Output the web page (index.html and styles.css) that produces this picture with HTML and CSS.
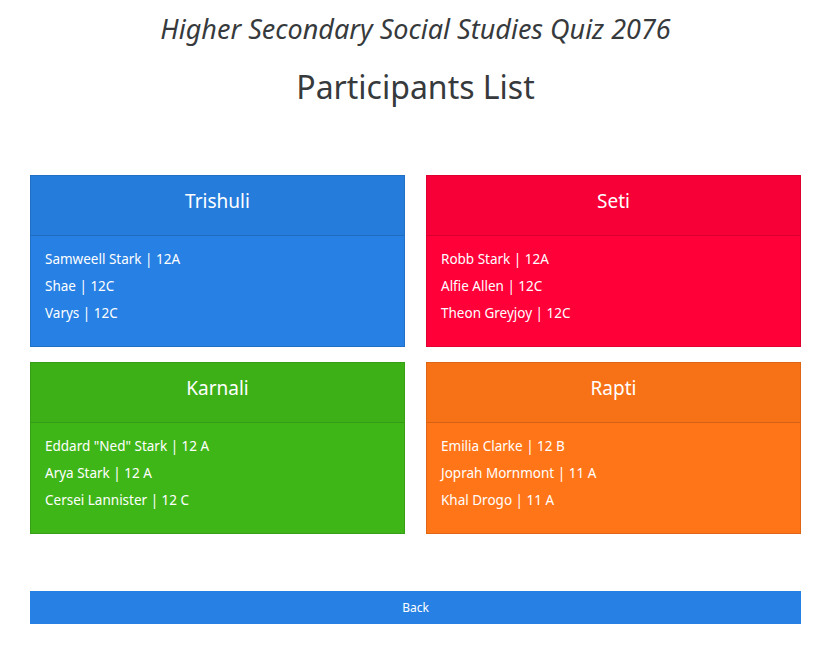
FILE: index.html
```html
<!DOCTYPE html>
<html lang="en">
<head>
  <meta charset="UTF-8" />
  <meta name="viewport" content="width=device-width, initial-scale=1" />
  <title>Participants List</title>
  <link rel="stylesheet" href="styles.css">
</head>
<body>
  <div class="container">
    <h3 class="quiz-title">Higher Secondary Social Studies Quiz 2076</h3>
    <h1 class="page-title">Participants List</h1>

    <div class="houses">
      <div class="card card-blue">
        <div class="card-header">Trishuli</div>
        <div class="card-body">
          <p>Samweell Stark | 12A</p>
          <p>Shae | 12C</p>
          <p>Varys | 12C</p>
        </div>
      </div>
      <div class="card card-red">
        <div class="card-header">Seti</div>
        <div class="card-body">
          <p>Robb Stark | 12A</p>
          <p>Alfie Allen | 12C</p>
          <p>Theon Greyjoy | 12C</p>
        </div>
      </div>
      <div class="card card-green">
        <div class="card-header">Karnali</div>
        <div class="card-body">
          <p>Eddard "Ned" Stark | 12 A</p>
          <p>Arya Stark | 12 A</p>
          <p>Cersei Lannister | 12 C</p>
        </div>
      </div>
      <div class="card card-orange">
        <div class="card-header">Rapti</div>
        <div class="card-body">
          <p>Emilia Clarke | 12 B</p>
          <p>Joprah Mornmont | 11 A</p>
          <p>Khal Drogo | 11 A</p>
        </div>
      </div>
    </div>

    <button class="back-btn" type="button">Back</button>
  </div>
</body>
</html>
```

FILE: styles.css
```css
body {
  margin: 0;
  font-family: "Noto Sans", "Open Sans", sans-serif;
  color: #373a3c;
  background-color: #fff;
}
.container {
  width: 771px;
  margin: 0 0 0 30px;
  padding-top: 12px;
}
.quiz-title {
  margin: 0 0 0 -30px;
  width: 831px;
  text-align: center;
  font-style: italic;
  font-weight: 400;
  font-size: 27px;
  line-height: 34px;
}
.page-title {
  margin: 19px 0 0;
  text-align: center;
  font-weight: 400;
  font-size: 32px;
  line-height: 44px;
}
.houses {
  display: grid;
  grid-template-columns: 1fr 1fr;
  column-gap: 21px;
  row-gap: 15px;
  margin-top: 66px;
}
.card {
  border: 1px solid rgba(0, 0, 0, 0.125);
  color: #fff;
}
.card-header {
  box-sizing: border-box;
  height: 60px;
  padding-bottom: 9px;
  display: flex;
  align-items: center;
  justify-content: center;
  font-size: 19px;
  background-color: rgba(0, 0, 0, 0.03);
  border-bottom: 1px solid rgba(0, 0, 0, 0.125);
}
.card-body {
  padding: 10px 14px 19px;
  font-size: 13.5px;
  line-height: 27px;
}
.card-body p {
  margin: 0;
}
.card-blue { background-color: #2780e3; }
.card-red { background-color: #ff0039; }
.card-green { background-color: #3fb618; }
.card-orange { background-color: #ff7518; }
.back-btn {
  display: block;
  width: 100%;
  height: 33px;
  margin-top: 57px;
  border: none;
  background-color: #2780e3;
  color: #fff;
  font-family: inherit;
  font-size: 12px;
  cursor: pointer;
}
.back-btn:hover {
  background-color: #1967be;
}
```
